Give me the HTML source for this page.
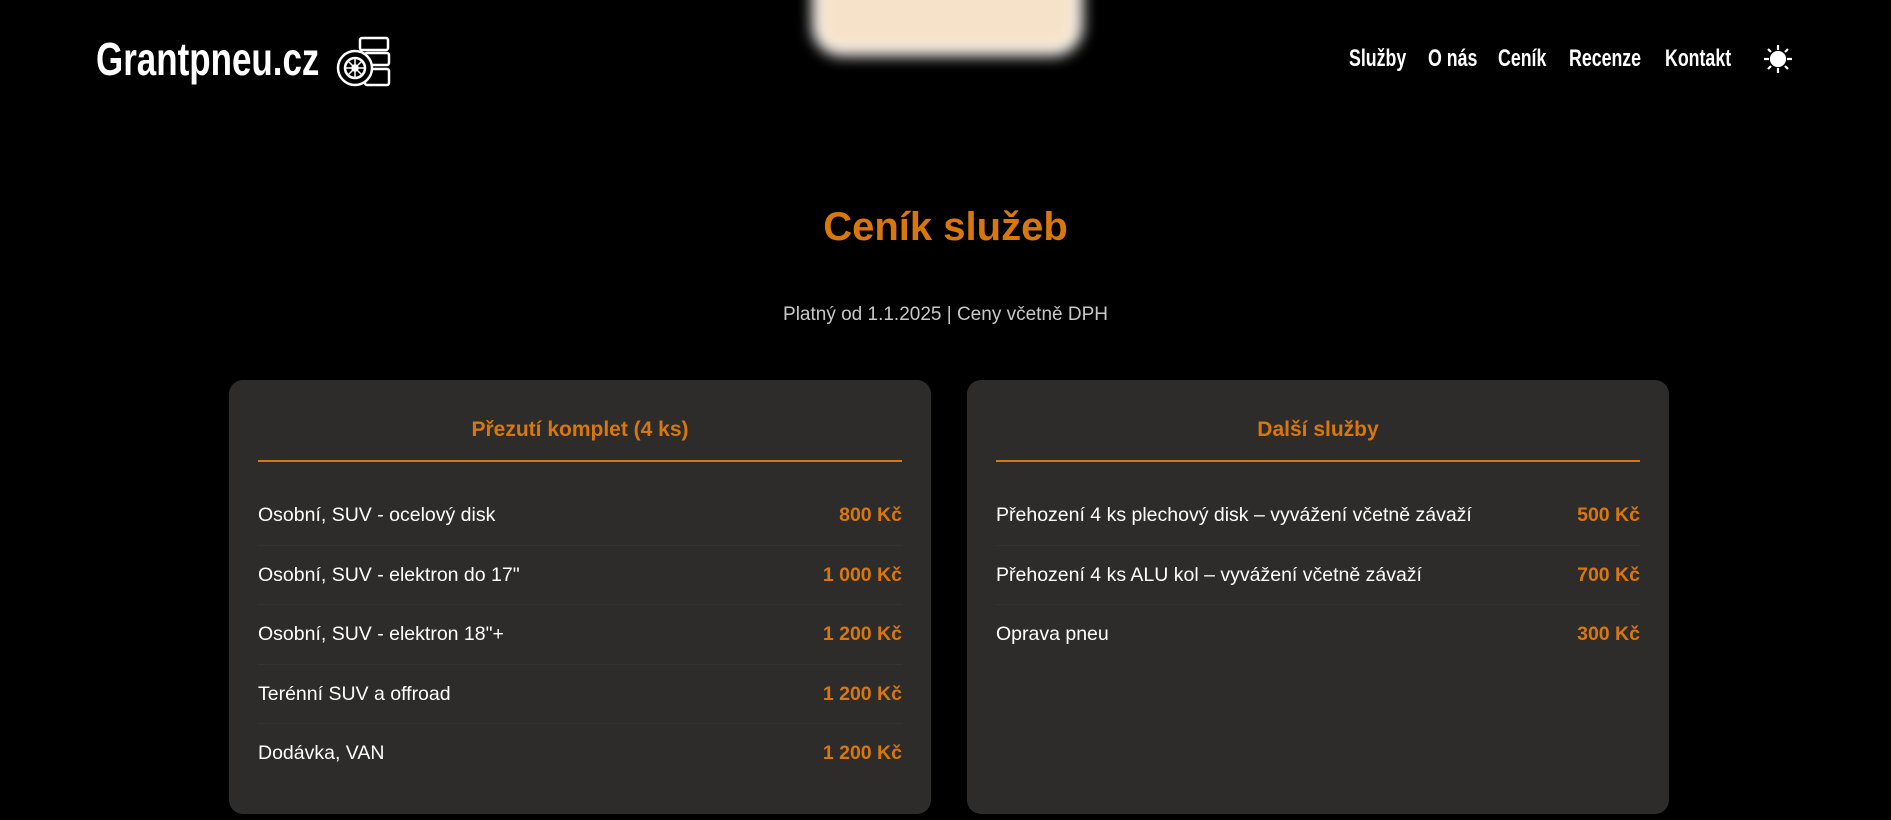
<!DOCTYPE html>
<html><head><meta charset="utf-8"><style>
*{margin:0;padding:0;box-sizing:border-box}
body{width:1891px;height:820px;background:#000;overflow:hidden;position:relative;font-family:"Liberation Sans",sans-serif;color:#fff}
.blob{position:absolute;left:820px;top:-30px;width:255px;height:78px;border-radius:22px;background:#f6e2c8;filter:blur(7px);box-shadow:0 0 0 8px #fff}
.logo{position:absolute;left:96px;top:30px;font-family:"Liberation Sans Narrow","Liberation Sans",sans-serif;font-size:46px;font-weight:bold;transform:scaleX(.76);transform-origin:left;line-height:58px}
.icon{position:absolute;left:335px;top:36px}
.nav{position:absolute;top:44px;left:1349px;font-family:"Liberation Sans Narrow","Liberation Sans",sans-serif;font-weight:bold;font-size:24px;line-height:30px}
.nav span{position:absolute;white-space:nowrap;transform:scaleX(.74);transform-origin:left}
h1{position:absolute;top:205px;width:100%;text-align:center;color:#d9770f;font-size:40px;font-weight:900}
.sub{position:absolute;top:304px;width:100%;text-align:center;color:#c8c8c8;font-size:19px}
.card{position:absolute;top:380px;width:702px;height:434px;background:#2d2c2b;border-radius:14px;padding:0 29px}
.card h2{text-align:center;color:#d9770f;font-size:21px;font-weight:bold;height:82px;line-height:100px;border-bottom:2px solid #d9770f}
.row{display:flex;justify-content:space-between;height:59.6px;line-height:59.6px;font-size:19.5px;border-bottom:1px solid #343332}
.rows{padding-top:24px}
.row b{color:#d9770f}
.row:last-child{border-bottom:none}
</style></head><body>
<div class="blob"></div>
<div class="logo">Grantpneu.cz</div>
<svg class="icon" width="56" height="52" viewBox="0 0 56 52" fill="none" stroke="#fff" stroke-width="2.5">
<rect x="25" y="2" width="28" height="12" rx="2"/><rect x="30" y="17" width="24" height="12" rx="2"/><rect x="30" y="33" width="24" height="16" rx="2"/>
<circle cx="20" cy="32" r="17" fill="#000"/><circle cx="20" cy="32" r="10"/><circle cx="20" cy="32" r="2.5" fill="#fff"/>
<path d="M20 22v20M10 32h20M13 25l14 14M27 25L13 39" stroke-width="1.5"/>
</svg>
<div class="nav">
<span style="left:0">Služby</span><span style="left:79px">O nás</span><span style="left:149px">Ceník</span><span style="left:220px">Recenze</span><span style="left:316px">Kontakt</span>
</div>
<svg style="position:absolute;left:1763px;top:44px" width="30" height="30" viewBox="0 0 30 30" stroke="#fff" stroke-width="2.2"><circle cx="15" cy="15" r="7" fill="#fff"/><path d="M15 1v5M15 24v5M1 15h5M24 15h5M5 5l3 3M22 22l3 3M25 5l-3 3M8 22l-3 3"/></svg>
<h1>Ceník služeb</h1>
<div class="sub">Platný od 1.1.2025 | Ceny včetně DPH</div>
<div class="card" style="left:229px"><h2>Přezutí komplet (4 ks)</h2><div class="rows">
<div class="row"><span>Osobní, SUV - ocelový disk</span><b>800 Kč</b></div>
<div class="row"><span>Osobní, SUV - elektron do 17"</span><b>1 000 Kč</b></div>
<div class="row"><span>Osobní, SUV - elektron 18"+</span><b>1 200 Kč</b></div>
<div class="row"><span>Terénní SUV a offroad</span><b>1 200 Kč</b></div>
<div class="row"><span>Dodávka, VAN</span><b>1 200 Kč</b></div>
</div></div>
<div class="card" style="left:967px"><h2>Další služby</h2><div class="rows">
<div class="row"><span>Přehození 4 ks plechový disk – vyvážení včetně závaží</span><b>500 Kč</b></div>
<div class="row"><span>Přehození 4 ks ALU kol – vyvážení včetně závaží</span><b>700 Kč</b></div>
<div class="row"><span>Oprava pneu</span><b>300 Kč</b></div>
</div></div>
</body></html>
